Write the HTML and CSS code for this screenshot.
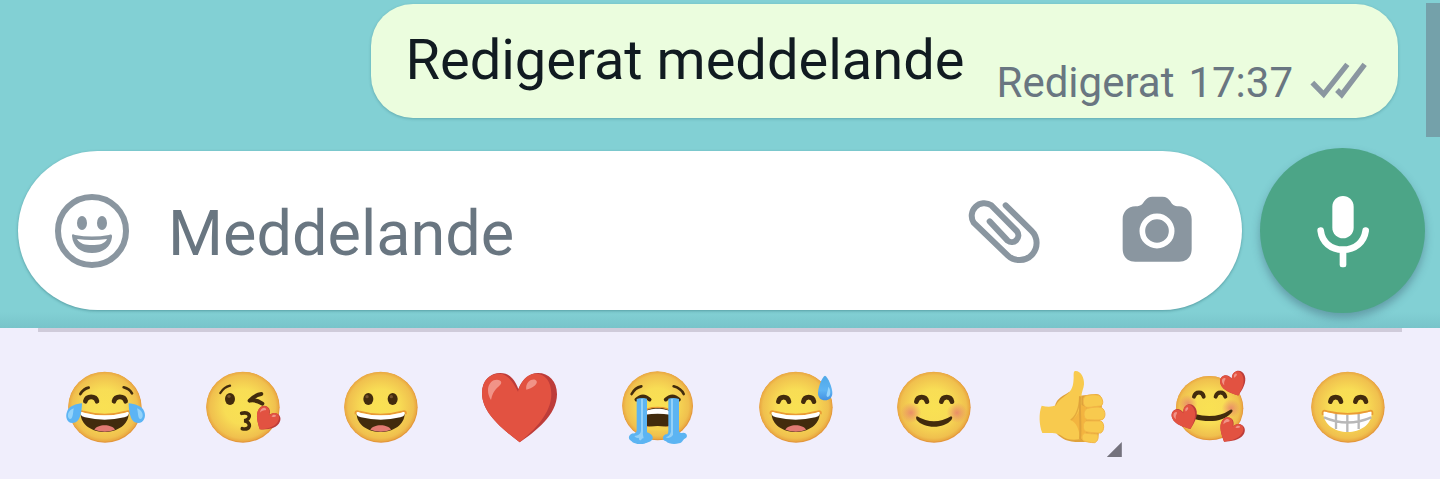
FILE: index.html
```html
<!DOCTYPE html>
<html lang="sv">
<head>
    <meta charset="UTF-8">
    <meta name="viewport" content="width=device-width, initial-scale=1.0">
    <title>Meddelande</title>
    <link rel="stylesheet" href="styles.css">
</head>
<body>
    <!-- Shared emoji parts -->
    <svg class="defs" aria-hidden="true">
        <defs>
            <radialGradient id="skin">
                <stop offset="0" stop-color="#f9e153"/>
                <stop offset="0.5" stop-color="#f8dd55"/>
                <stop offset="0.9" stop-color="#f0c04e"/>
                <stop offset="1" stop-color="#e9a640"/>
            </radialGradient>
            <radialGradient id="blush">
                <stop offset="0" stop-color="#e8836b" stop-opacity="0.85"/>
                <stop offset="1" stop-color="#e8836b" stop-opacity="0"/>
            </radialGradient>
            <linearGradient id="drop" x1="0" y1="0" x2="0" y2="1">
                <stop offset="0" stop-color="#4fa8e8"/>
                <stop offset="0.6" stop-color="#5eb4f3"/>
                <stop offset="1" stop-color="#4391e2"/>
            </linearGradient>
            <g id="face">
                <ellipse cx="126" cy="127" rx="110" ry="106" fill="#e3963a"/>
                <ellipse cx="125" cy="125" rx="109" ry="105" fill="url(#skin)"/>
            </g>
            <g id="happy-eyes" fill="none" stroke="#422b0d" stroke-width="14" stroke-linecap="round">
                <path d="M73 110C77 92 101 92 105 110"/>
                <path d="M148 110C152 92 176 92 180 110"/>
            </g>
            <g id="open-mouth">
                <path d="M50 148C46 136 56 138 62 140Q125 158 188 140C194 138 204 136 200 148" fill="none" stroke="#ea9a35" stroke-width="5"/>
                <path d="M53 146Q125 160 197 146C197 178 163 201 125 201S53 178 53 146Z" fill="#422b0d"/>
                <path d="M94 194C102 176 148 176 156 194Q126 206 94 194Z" fill="#e27a72"/>
                <path d="M53 147C52 140 58 140 63 143Q125 159 187 143C192 140 198 140 197 147C196 153 190 155 184 157Q125 171 66 157C60 155 54 153 53 147Z" fill="#fff"/>
            </g>
            <g id="heart">
                <path d="M128 232C80 195 15 145 15 85C15 45 40 24 70 24C98 24 115 45 124 72C135 45 155 24 183 24C215 24 240 48 240 88C240 150 175 200 128 232Z" fill="#bd3c39"/>
                <path d="M128 232C80 195 15 145 15 85C15 45 40 26 66 26C92 26 108 50 123 80C130 50 150 26 175 26C204 26 223 48 223 88C223 145 172 196 128 232Z" fill="#e25241"/>
                <path d="M42 105C28 84 30 56 50 46C62 42 76 46 72 56C66 66 48 72 42 105ZM148 74C144 54 162 40 174 44C188 50 174 68 148 74Z" fill="#f19387"/>
            </g>
        </defs>
    </svg>

    <main class="chat">
        <div class="scrollbar"></div>

        <div class="message">
            <span class="message-text">Redigerat meddelande</span>
            <span class="message-meta">
                <span>Redigerat</span>
                <time>17:37</time>
                <svg class="ticks" viewBox="980 180 192 132" role="img" aria-label="Levererat">
                    <path d="M996 245L1030 280L1101 190M1070 267L1084 281L1153 190" fill="none" stroke="#8a96a0" stroke-width="16"/>
                </svg>
            </span>
        </div>

        <form class="composer">
            <div class="composer-field">
                <button type="button" class="icon-button" aria-label="Emoji">
                    <svg viewBox="0 0 80 80">
                        <circle cx="40" cy="40" r="34" fill="none" stroke="#8a96a0" stroke-width="6"/>
                        <ellipse cx="30" cy="32" rx="5" ry="7" fill="#8a96a0"/>
                        <ellipse cx="50" cy="32" rx="5" ry="7" fill="#8a96a0"/>
                        <path d="M20 45C20 43 21 43 23 44Q40 47 57 44C60 43 60 44 60 46C59 56 51 62 40 62S21 56 20 45ZM25 48C28 53 33 54 40 54S53 53 55 48Q40 50 25 48Z" fill="#8a96a0" fill-rule="evenodd"/>
                    </svg>
                </button>
                <input class="composer-input" type="text" placeholder="Meddelande" aria-label="Meddelande">
                <button type="button" class="icon-button" aria-label="Bifoga">
                    <svg viewBox="70 153 240 240">
                        <path d="M198 196L275 272A51 51 0 0 1 204 346L102 248A38 38 0 0 1 155 196L232 274A20 20 0 0 1 204 302L150 244" fill="none" stroke="#8a96a0" stroke-width="18" stroke-linecap="round"/>
                    </svg>
                </button>
                <button type="button" class="icon-button camera" aria-label="Kamera">
                    <svg viewBox="532 153 240 240">
                        <path d="M588 199C606 199 608 192 614 184C622 174 628 170 638 170H668C680 170 686 175 692 184C698 194 702 199 718 199C742 200 756 216 756 238V326C756 350 742 365 718 365H587C563 365 549 350 549 326V238C549 216 564 199 588 199Z" fill="#8a96a0"/>
                        <circle cx="652" cy="273" r="44" fill="none" stroke="#fff" stroke-width="17"/>
                    </svg>
                </button>
            </div>
            <button type="button" class="mic-button" aria-label="Röstmeddelande">
                <svg viewBox="1089 153 240 240">
                    <rect x="1177" y="168" width="64" height="127" rx="32" fill="#fff"/>
                    <path d="M1142 272C1146 306 1172 329 1209 329S1272 306 1277 272" fill="none" stroke="#fff" stroke-width="20" stroke-linecap="round"/>
                    <rect x="1199" y="326" width="20" height="56" rx="7" fill="#fff"/>
                </svg>
            </button>
        </form>
    </main>

    <div class="keyboard">
        <div class="emoji-row">
            <button type="button" class="emoji" aria-label="Glädjetårar">
                <svg viewBox="0 0 252 252">
                    <use href="#face"/>
                    <g fill="none" stroke="#422b0d" stroke-linecap="round">
                        <path d="M52 87Q62 71 77 68M182 67Q200 72 207 85" stroke-width="8"/>
                        <path d="M67 109C71 91 98 91 102 109M153 109C157 91 184 91 188 109" stroke-width="14"/>
                    </g>
                    <use href="#open-mouth"/>
                    <path d="M57 115C56 143 52 174 28 174C12 174 6 155 12 140C18 122 40 117 57 115ZM197 115C198 143 202 174 226 174C242 174 250 155 244 140C238 122 214 117 197 115Z" fill="#5cb4f4"/>
                    <path d="M32 130C14 136 10 156 20 162C30 164 30 144 32 130ZM222 130C240 136 244 156 234 162C224 164 226 144 222 130Z" fill="#93d3fa"/>
                </svg>
            </button>
            <button type="button" class="emoji" aria-label="Slängkyss">
                <svg viewBox="0 0 252 252">
                    <use href="#face"/>
                    <path d="M58 84Q69 66 87 62" fill="none" stroke="#422b0d" stroke-width="7" stroke-linecap="round"/>
                    <ellipse cx="87" cy="102" rx="15" ry="18" fill="#422b0d"/>
                    <circle cx="84" cy="94" r="5" fill="#73512d"/>
                    <path d="M181 87C168 88 156 97 146 107C158 104 172 108 184 116" fill="none" stroke="#422b0d" stroke-width="12" stroke-linecap="round" stroke-linejoin="round"/>
                    <path d="M122 145C150 138 152 162 130 167C152 172 150 197 124 191" fill="none" stroke="#422b0d" stroke-width="11" stroke-linecap="round"/>
                    <use href="#heart" transform="translate(196 165) rotate(35) scale(.33) translate(-128 -128)"/>
                </svg>
            </button>
            <button type="button" class="emoji" aria-label="Leende">
                <svg viewBox="0 0 252 252">
                    <use href="#face"/>
                    <ellipse cx="88" cy="102" rx="15" ry="18" fill="#422b0d"/>
                    <ellipse cx="161" cy="102" rx="15" ry="18" fill="#422b0d"/>
                    <circle cx="84" cy="95" r="5" fill="#73512d"/>
                    <circle cx="157" cy="95" r="5" fill="#73512d"/>
                    <use href="#open-mouth"/>
                </svg>
            </button>
            <button type="button" class="emoji" aria-label="Hjärta">
                <svg viewBox="0 0 252 252">
                    <use href="#heart"/>
                </svg>
            </button>
            <button type="button" class="emoji" aria-label="Gråter">
                <svg viewBox="0 0 252 252">
                    <ellipse cx="128" cy="123" rx="106" ry="103" fill="#e3963a"/>
                    <ellipse cx="127" cy="121" rx="105" ry="102" fill="url(#skin)"/>
                    <g fill="none" stroke="#422b0d" stroke-linecap="round">
                        <path d="M50 87Q60 68 79 64M176 64Q198 70 206 87" stroke-width="8"/>
                        <path d="M64 104Q84 84 104 104M152 104Q172 84 192 104" stroke-width="11"/>
                    </g>
                    <path d="M88 142C94 122 162 122 168 142V182C150 192 106 192 88 182Z" fill="#422b0d" stroke="#ea9a35" stroke-width="4"/>
                    <path d="M90 142C98 128 158 128 166 142V149Q128 143 90 149Z" fill="#fff"/>
                    <path d="M86 188Q128 178 170 188V196H86Z" fill="#f6d352"/>
                    <path d="M65 102Q80 96 96 101V202C106 205 115 212 113 221C110 231 94 232 88 236C74 239 56 237 49 228C36 222 42 207 54 205Q62 207 65 198Z" fill="#5cb4f2"/>
                    <path d="M160 101Q176 96 192 102V198Q194 207 204 203C216 202 221 216 209 221C202 225 204 232 192 235C178 239 160 237 153 229C140 227 142 212 152 208Q160 209 160 198Z" fill="#5cb4f2"/>
                    <path d="M78 102V198Q76 212 58 213Q64 221 72 218Q70 226 78 226Q81 218 86 220Q82 208 84 198V102ZM168 102V200Q166 212 152 217Q164 224 174 210V102Z" fill="#94d1f8"/>
                </svg>
            </button>
            <button type="button" class="emoji" aria-label="Svettigt leende">
                <svg viewBox="0 0 252 252">
                    <use href="#face"/>
                    <use href="#happy-eyes"/>
                    <use href="#open-mouth"/>
                    <path d="M213 32C222 35 235 68 235 84C235 98 226 106 213 106S192 98 192 84C192 68 204 35 213 32Z" fill="url(#drop)"/>
                    <path d="M223 65C232 76 230 94 221 96C213 93 222 80 223 65Z" fill="#96d5fb"/>
                </svg>
            </button>
            <button type="button" class="emoji" aria-label="Rodnande leende">
                <svg viewBox="0 0 252 252">
                    <use href="#face"/>
                    <circle cx="57" cy="143" r="31" fill="url(#blush)"/>
                    <circle cx="195" cy="143" r="31" fill="url(#blush)"/>
                    <use href="#happy-eyes"/>
                    <path d="M75 154Q126 184 177 154Q184 156 178 165C156 192 96 192 74 165Q70 156 75 154Z" fill="#422b0d"/>
                </svg>
            </button>
            <button type="button" class="emoji has-variants" aria-label="Tummen upp">
                <svg viewBox="0 0 252 252">
                    <path d="M74 126C80 96 102 92 118 80L150 92L196 87C212 86 218 96 216 120L206 210C200 232 180 232 150 231C110 231 98 222 80 206Z" fill="#dfa23b"/>
                    <path d="M35 122C50 126 66 126 78 121C86 104 102 96 116 84C130 68 130 54 131 38C131 26 130 18 137 18C153 18 163 38 162 58C161 72 154 82 154 96V222C124 228 108 222 94 212C82 204 70 203 37 204C27 180 26 144 35 122Z" fill="#f8ca4e"/>
                    <path d="M122 165C138 158 148 144 150 118L168 126V220H150C148 196 140 172 122 165Z" fill="#f3b43f"/>
                    <path d="M122 165Q146 150 150 94" fill="none" stroke="#e5aa3d" stroke-width="4"/>
                    <path d="M150 94C148 130 154 200 150 222" fill="none" stroke="#dfa23b" stroke-width="6"/>
                    <g fill="#f8ca4e" stroke="#f3b646" stroke-width="3">
                        <path d="M166 93C180 89 196 88 206 91C220 97 222 120 212 123C198 124 182 128 170 127C156 122 158 98 166 93Z"/>
                        <path d="M170 131C184 127 204 124 215 128C228 136 228 160 216 164C202 166 184 164 172 164C158 160 160 136 170 131Z"/>
                        <path d="M168 168H212C224 172 224 198 212 204C198 204 182 203 168 200C156 194 158 172 168 168Z"/>
                        <path d="M164 204C178 206 192 207 201 207C208 212 204 230 194 233C182 233 172 231 162 228C152 222 156 208 164 204Z"/>
                    </g>
                </svg>
            </button>
            <button type="button" class="emoji" aria-label="Förälskad">
                <svg viewBox="0 0 252 252">
                    <ellipse cx="125" cy="130" rx="101" ry="96" fill="#e3963a"/>
                    <ellipse cx="124" cy="128" rx="100" ry="95" fill="url(#skin)"/>
                    <circle cx="60" cy="117" r="28" fill="url(#blush)"/>
                    <circle cx="189" cy="130" r="28" fill="url(#blush)"/>
                    <path d="M78 95C82 78 104 78 107 95M143 95C147 78 168 78 172 95" fill="none" stroke="#422b0d" stroke-width="12" stroke-linecap="round"/>
                    <path d="M80 147Q144 164 187 134Q196 132 193 140C170 170 122 174 80 162Z" fill="#422b0d"/>
                    <use href="#heart" transform="translate(199 58) rotate(-20) scale(.34) translate(-128 -128)"/>
                    <use href="#heart" transform="translate(54 159) rotate(-22) scale(.34) translate(-128 -128)"/>
                    <use href="#heart" transform="translate(187 200) rotate(32) scale(.34) translate(-128 -128)"/>
                </svg>
            </button>
            <button type="button" class="emoji" aria-label="Flin">
                <svg viewBox="0 0 252 252">
                    <use href="#face"/>
                    <use href="#happy-eyes"/>
                    <path d="M52 146C50 138 58 138 64 141Q125 156 186 141C192 138 199 138 197 146C196 178 163 201 125 201S54 178 52 146Z" fill="#fff"/>
                    <path d="M54 157Q125 188 196 157M90 146V192M124 150V201M158 146V192" fill="none" stroke="#b8b8b8" stroke-width="7"/>
                    <path d="M50 150C47 134 56 136 64 139Q125 154 186 139C194 136 202 134 199 150" fill="none" stroke="#ea9a35" stroke-width="5"/>
                </svg>
            </button>
        </div>
    </div>
</body>
</html>
```
FILE: styles.css
```css
* {
    box-sizing: border-box;
}

body {
    margin: 0;
    min-height: 100vh;
    display: flex;
    flex-direction: column;
    font-family: Roboto, sans-serif;
    background: #f0eefc;
}

button {
    padding: 0;
    border: none;
    background: none;
    cursor: pointer;
}

svg {
    display: block;
}

.defs {
    position: absolute;
    width: 0;
    height: 0;
}

.chat {
    position: relative;
    padding: 4px 15px 15px 18px;
    background: linear-gradient(to top, #78c4ca, #82d0d4 16px);
}

.scrollbar {
    position: absolute;
    top: 3px;
    right: 0;
    width: 14px;
    height: 134px;
    background: #74a1aa;
}

.message {
    display: flex;
    align-items: flex-end;
    gap: 32px;
    width: fit-content;
    margin: 0 27px 30px auto;
    padding: 10px 27px 10px 34px;
    border-radius: 42px;
    background: #ebfdde;
    box-shadow: 0 1px 3px rgba(0, 60, 70, 0.25);
}

.message-text {
    padding: 13px 0 15px;
    font-size: 56px;
    line-height: 66px;
    color: #111b21;
}

.message-meta {
    display: flex;
    align-items: center;
    gap: 14px;
    font-size: 42px;
    line-height: 50px;
    color: #697681;
}

.ticks {
    width: 64px;
    height: 44px;
}

.composer {
    display: flex;
    align-items: center;
    gap: 18px;
}

.composer-field {
    flex: 1;
    min-width: 0;
    height: 159px;
    display: flex;
    align-items: center;
    padding: 0 45px 0 34px;
    border-radius: 80px;
    background: #fff;
    box-shadow: 0 1px 3px rgba(0, 60, 70, 0.35);
}

.icon-button {
    flex: none;
}

.icon-button svg,
.mic-button svg {
    width: 80px;
    height: 80px;
}

.camera {
    margin-left: 74px;
}

.composer-input {
    flex: 1;
    min-width: 0;
    height: 80px;
    margin-left: 36px;
    padding: 6px 0 0;
    border: none;
    outline: none;
    background: none;
    font-family: inherit;
    font-size: 63px;
    color: #111b21;
}

.composer-input::placeholder {
    color: #697681;
    opacity: 1;
}

.mic-button {
    width: 165px;
    height: 165px;
    display: flex;
    align-items: center;
    justify-content: center;
    border-radius: 50%;
    background: #4ca587;
    box-shadow: 0 5px 9px rgba(50, 80, 100, 0.4);
}

.keyboard {
    position: relative;
    flex: 1;
    background: #f0eefc;
}

.keyboard::before {
    content: "";
    display: block;
    height: 4px;
    margin: 0 38px;
    background: #cfcbda;
}

.emoji-row {
    display: grid;
    grid-template-columns: repeat(10, 1fr);
    padding: 33px 23px 22px 36px;
}

.emoji {
    position: relative;
    display: flex;
    justify-content: center;
}

.emoji svg {
    width: 84px;
    height: 84px;
}

/* Corner marker for emoji with skin tone variants */
.has-variants::after {
    content: "";
    position: absolute;
    right: 19px;
    bottom: -8px;
    width: 15px;
    height: 15px;
    background: #74727d;
    clip-path: polygon(100% 0, 100% 100%, 0 100%);
}
```
